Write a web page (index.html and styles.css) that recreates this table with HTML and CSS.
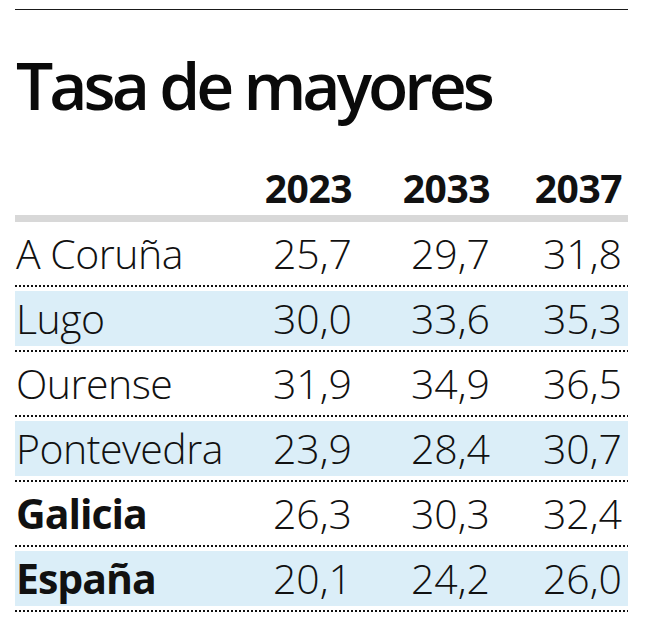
FILE: index.html
```html
<!DOCTYPE html>
<html lang="es">
<head>
<meta charset="utf-8">
<title>Tasa de mayores</title>
<link rel="stylesheet" href="styles.css">
</head>
<body>
<div class="chart">
  <div class="top-rule"></div>
  <h1 class="title">Tasa de mayores</h1>
  <div class="table">
    <div class="row head">
      <span class="label"></span><span class="num">2023</span><span class="num">2033</span><span class="num">2037</span>
    </div>
    <div class="head-bar"></div>
    <div class="row"><span class="label">A Coruña</span><span class="num">25,7</span><span class="num">29,7</span><span class="num">31,8</span></div>
    <div class="dots"></div>
    <div class="row stripe"><span class="label">Lugo</span><span class="num">30,0</span><span class="num">33,6</span><span class="num">35,3</span></div>
    <div class="dots"></div>
    <div class="row"><span class="label">Ourense</span><span class="num">31,9</span><span class="num">34,9</span><span class="num">36,5</span></div>
    <div class="dots"></div>
    <div class="row stripe"><span class="label">Pontevedra</span><span class="num">23,9</span><span class="num">28,4</span><span class="num">30,7</span></div>
    <div class="dots"></div>
    <div class="row"><span class="label strong">Galicia</span><span class="num">26,3</span><span class="num">30,3</span><span class="num">32,4</span></div>
    <div class="dots"></div>
    <div class="row stripe"><span class="label strong">España</span><span class="num">20,1</span><span class="num">24,2</span><span class="num">26,0</span></div>
    <div class="dots"></div>
  </div>
</div>
</body>
</html>
```

FILE: styles.css
```css
html, body {
  margin: 0;
  padding: 0;
  background: #ffffff;
}

.chart {
  width: 613px;
  margin-left: 15px;
  padding-top: 9px;
  font-family: "Open Sans", "DejaVu Sans", sans-serif;
  color: #111111;
}

.top-rule {
  height: 1px;
  background: #1a1a1a;
}

.title {
  margin: 41px 0 0 1px;
  font-size: 66px;
  line-height: 66px;
  font-weight: 650;
  letter-spacing: -4px;
  color: #0a0a0a;
}

.table {
  margin-top: 51px;
}

.row {
  display: grid;
  grid-template-columns: minmax(0, 1fr) 138px 138px 132px;
  padding: 0 6px 0 1px;
  height: 55px;
  margin: 4px 0;
  font-size: 41px;
  line-height: 55px;
  font-weight: 300;
  white-space: nowrap;
}

.label {
  letter-spacing: -0.5px;
}

.row.head {
  height: 39px;
  line-height: 39px;
  margin: 0;
  font-size: 39px;
  font-weight: 700;
  letter-spacing: -0.5px;
}

.head-bar {
  height: 7px;
  margin-top: 8px;
  background: #d8d8d8;
}

.stripe {
  background: #dbeef8;
}

.num {
  text-align: right;
}

.strong {
  font-weight: 700;
  letter-spacing: -1px;
}

.dots {
  height: 2px;
  background: repeating-linear-gradient(to right, #111111 0 2px, transparent 2px 4px);
}
```
